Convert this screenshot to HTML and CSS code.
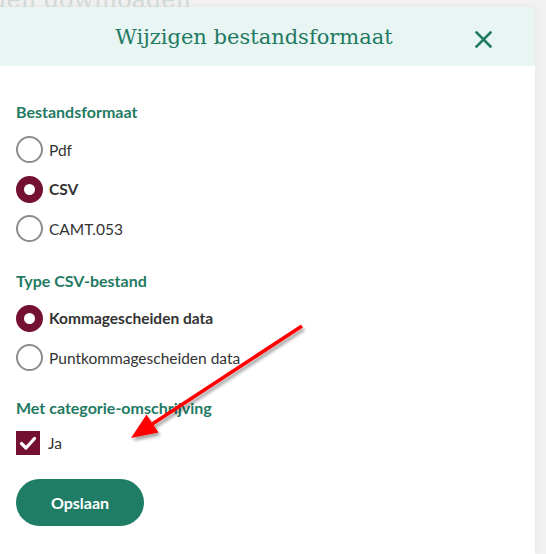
FILE: index.html
```html
<!DOCTYPE html>
<html lang="nl">
<head>
<meta charset="utf-8">
<title>Wijzigen bestandsformaat</title>
<link rel="stylesheet" href="styles.css">
</head>
<body>
<div class="page-top">
  <div class="page-title">Bestanden downloaden</div>
</div>
<div class="modal">
  <div class="modal-header">
    <h1 class="modal-title">Wijzigen bestandsformaat</h1>
    <button class="close" aria-label="Sluiten">
      <svg width="17" height="17" viewBox="0 0 17 17"><path d="M1.5 1.5 L15.5 15.5 M15.5 1.5 L1.5 15.5" stroke="#1f7a64" stroke-width="2.6" stroke-linecap="square" fill="none"/></svg>
    </button>
  </div>
  <div class="modal-body">
    <div class="group">
      <div class="group-label">Bestandsformaat</div>
      <label class="option"><span class="radio"></span><span class="opt-text">Pdf</span></label>
      <label class="option"><span class="radio checked"></span><span class="opt-text strong">CSV</span></label>
      <label class="option"><span class="radio"></span><span class="opt-text">CAMT.053</span></label>
    </div>
    <div class="group second">
      <div class="group-label">Type CSV-bestand</div>
      <label class="option"><span class="radio checked"></span><span class="opt-text strong">Kommagescheiden data</span></label>
      <label class="option"><span class="radio"></span><span class="opt-text">Puntkommagescheiden data</span></label>
    </div>
    <div class="group last">
      <div class="group-label">Met categorie-omschrijving</div>
      <label class="option check-option"><span class="checkbox"><svg width="24" height="24" viewBox="0 0 24 24"><path d="M5.5 12.5 L10 17 L18.5 7.5" stroke="#fff" stroke-width="3.2" fill="none" stroke-linecap="round" stroke-linejoin="round"/></svg></span><span class="opt-text">Ja</span></label>
    </div>
    <button class="save">Opslaan</button>
  </div>
</div>
<svg class="annotation" width="546" height="554" viewBox="0 0 546 554">
  <defs>
    <filter id="sh" x="-20%" y="-20%" width="140%" height="140%">
      <feGaussianBlur in="SourceAlpha" stdDeviation="1.5"/>
      <feOffset dx="2" dy="3" result="b"/>
      <feComponentTransfer><feFuncA type="linear" slope="0.35"/></feComponentTransfer>
      <feMerge><feMergeNode/><feMergeNode in="SourceGraphic"/></feMerge>
    </filter>
  </defs>
  <g filter="url(#sh)">
    <line x1="302" y1="326" x2="150" y2="425.5" stroke="#ff0000" stroke-width="3.6" stroke-linecap="butt"/>
    <polygon points="131,438 158.5,432.5 146.5,414.5" fill="#ff0000"/>
  </g>
</svg>
</body>
</html>
```

FILE: styles.css
```css
* { box-sizing: border-box; }
html, body { margin: 0; padding: 0; }
body {
  width: 546px;
  height: 554px;
  overflow: hidden;
  background: #f2f2f2;
  font-family: "Lato", "Liberation Sans", sans-serif;
  color: #2f2f2f;
  position: relative;
}
.page-top {
  height: 7px;
  width: 191px;
  overflow: hidden;
  display: flex;
  justify-content: flex-end;
  align-items: flex-end;
}
.page-title {
  flex: none;
  white-space: nowrap;
  font-family: "DejaVu Serif", serif;
  font-size: 24px;
  line-height: 24px;
  margin-bottom: -5px;
  color: #d3d9d6;
}
.modal {
  width: 535px;
  height: 547px;
  background: #fff;
  box-shadow: 0 0 10px rgba(0,0,0,0.06);
}
.modal-header {
  height: 59px;
  background: #e8f5f2;
  display: flex;
  align-items: center;
  justify-content: center;
  padding-right: 27px;
  position: relative;
}
.modal-title {
  margin: 0;
  font-family: "DejaVu Serif", serif;
  font-weight: normal;
  font-size: 21px;
  color: #1f7a64;
}
.close {
  position: absolute;
  right: 43px;
  top: 24px;
  width: 17px;
  height: 17px;
  padding: 0;
  border: 0;
  background: none;
  display: block;
}
.close svg { display: block; }
.modal-body {
  padding: 36px 16px 0 16px;
}
.group { margin-bottom: 22px; }
.group.second { margin-bottom: 20px; }
.group.last { margin-bottom: 16px; }
.group-label {
  font-size: 16px;
  line-height: 20px;
  font-weight: 700;
  color: #1f7a64;
  margin-bottom: 8px;
}
.group.last .group-label { margin-bottom: 6px; }
.option {
  display: flex;
  align-items: center;
  height: 39.5px;
}
.radio {
  width: 27px;
  height: 27px;
  border-radius: 50%;
  border: 2px solid #8c8c8c;
  background: #fff;
  flex: none;
}
.radio.checked {
  border: 8px solid #741032;
}
.opt-text {
  font-size: 15.5px;
  margin-left: 6px;
  color: #333;
}
.opt-text.strong { font-weight: 700; }
.checkbox {
  width: 24px;
  height: 24px;
  background: #741032;
  flex: none;
}
.checkbox svg { display: block; }
.check-option .opt-text { margin-left: 8px; }
.save {
  display: block;
  width: 128px;
  height: 47px;
  border: 0;
  border-radius: 24px;
  background: #1f7d66;
  color: #fff;
  font-family: "Lato", "Liberation Sans", sans-serif;
  font-size: 16px;
  font-weight: 700;
}
.annotation {
  position: absolute;
  left: 0;
  top: 0;
  pointer-events: none;
}
```
